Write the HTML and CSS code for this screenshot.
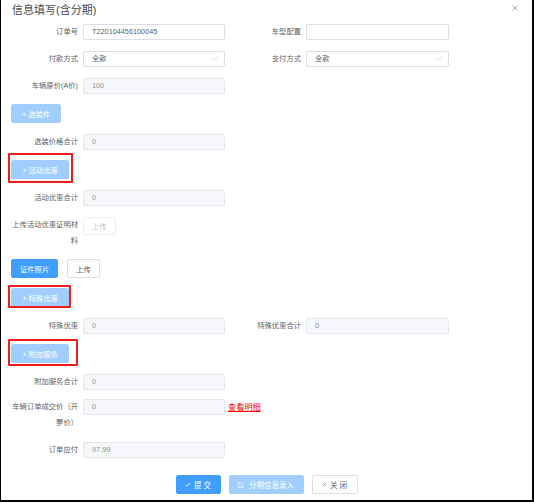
FILE: index.html
```html
<!DOCTYPE html>
<html lang="zh">
<head>
<meta charset="utf-8">
<title>信息填写(含分期)</title>
<link rel="stylesheet" href="styles.css">
</head>
<body>
<div class="dialog">
  <div class="header">
    <span class="title">信息填写(含分期)</span>
    <span class="close"><svg width="6" height="6" viewBox="0 0 6 6"><path d="M0.5 0.5L5.5 5.5M5.5 0.5L0.5 5.5" stroke="#909399" stroke-width="0.8" fill="none"/></svg></span>
  </div>
  <div class="body">
    <div class="row">
      <div class="item"><label class="lbl">订单号</label><div class="input">T220104456100045</div></div>
      <div class="item"><label class="lbl">车型配置</label><div class="input wide"></div></div>
    </div>
    <div class="row">
      <div class="item"><label class="lbl">付款方式</label><div class="input select">全款<svg class="chev" width="7" height="4" viewBox="0 0 7 4"><path d="M0.5 0.5L3.5 3.3L6.5 0.5" stroke="#c0c4cc" stroke-width="0.7" fill="none"/></svg></div></div>
      <div class="item"><label class="lbl">支付方式</label><div class="input select wide">全款<svg class="chev" width="7" height="4" viewBox="0 0 7 4"><path d="M0.5 0.5L3.5 3.3L6.5 0.5" stroke="#c0c4cc" stroke-width="0.7" fill="none"/></svg></div></div>
    </div>
    <div class="item"><label class="lbl">车辆原价(A价)</label><div class="input disabled">100</div></div>

    <div class="btn-row"><span class="btn light add">+ 选装件</span></div>
    <div class="item"><label class="lbl">选装价格合计</label><div class="input disabled">0</div></div>

    <div class="btn-row"><span class="btn light mark mark-1">+ 活动优惠</span></div>
    <div class="item"><label class="lbl">活动优惠合计</label><div class="input disabled">0</div></div>
    <div class="item"><label class="lbl">上传活动优惠证明材料</label><span class="btn plain-dis">上传</span></div>

    <div class="btn-row gap"><span class="btn primary">证件照片</span><span class="btn plain">上传</span></div>
    <div class="btn-row"><span class="btn light mark mark-2">+ 特殊优惠</span></div>
    <div class="row">
      <div class="item"><label class="lbl">特殊优惠</label><div class="input disabled">0</div></div>
      <div class="item"><label class="lbl">特殊优惠合计</label><div class="input disabled wide">0</div></div>
    </div>

    <div class="btn-row"><span class="btn light mark mark-3">+ 附加服务</span></div>
    <div class="item tight"><label class="lbl">附加服务合计</label><div class="input disabled">0</div></div>
    <div class="item"><label class="lbl">车辆订单成交价（开票价）</label><div class="input disabled">0</div><a class="link">查看明细</a></div>
    <div class="item last"><label class="lbl">订单应付</label><div class="input disabled">97.99</div></div>
  </div>
  <div class="footer">
    <span class="btn primary fbtn"><svg class="ico" width="6" height="5" viewBox="0 0 6 5"><path d="M0.6 2.6L2.3 4.1L5.4 0.8" stroke="#fff" stroke-width="0.9" fill="none"/></svg>提 交</span>
    <span class="btn light fbtn wide-f"><svg class="ico" width="6" height="6" viewBox="0 0 6 6"><path d="M3 0.6H0.6V5.4H5.4V3" stroke="#fff" stroke-width="0.7" fill="none"/><path d="M2.4 3.6L5.2 0.8" stroke="#fff" stroke-width="0.7" fill="none"/></svg>分期信息录入</span>
    <span class="btn plain fbtn"><svg class="ico" width="5" height="5" viewBox="0 0 5 5"><path d="M0.6 0.6L4.4 4.4M4.4 0.6L0.6 4.4" stroke="#909399" stroke-width="0.7" fill="none"/></svg>关 闭</span>
  </div>
</div>
</body>
</html>
```

FILE: styles.css
```css
html, body {
  margin: 0;
  padding: 0;
  background: #fff;
}
.dialog {
  width: 534px;
  height: 502px;
  box-sizing: border-box;
  border-left: 1px solid #000;
  border-right: 2px solid #000;
  border-bottom: 2px solid #000;
  font-family: "Liberation Sans", "Noto Sans CJK SC", sans-serif;
  font-size: 7.3px;
  color: #606266;
  position: relative;
}
.header {
  display: flex;
  justify-content: space-between;
  align-items: flex-start;
  padding: 2px 10px 0 11px;
  height: 22px;
  box-sizing: border-box;
}
.title {
  font-size: 11px;
  line-height: 16px;
  color: #4a4a4a;
}
.close {
  display: flex;
  margin-top: 3px;
  margin-right: 4px;
}
.body {
  padding: 2px 0 0 10px;
}
.row {
  display: flex;
  gap: 9px;
}
.item {
  display: flex;
  align-items: flex-start;
  margin-bottom: 11px;
}
.item.tight { margin-bottom: 9px; }
.item.last { margin-bottom: 0; }
.lbl {
  width: 72px;
  padding-right: 5px;
  box-sizing: border-box;
  text-align: right;
  line-height: 16px;
  color: #606266;
  flex-shrink: 0;
}
.input {
  width: 142px;
  height: 16px;
  box-sizing: border-box;
  border: 1px solid #dcdfe6;
  border-radius: 2px;
  padding: 0 8px;
  line-height: 14px;
  color: #606266;
  display: flex;
  align-items: center;
  justify-content: space-between;
}
.input.wide { width: 143px; }
.input.disabled {
  background: #f5f7fa;
  border-color: #e4e7ed;
  color: #909399;
}
.chev { margin-right: -2px; }
.btn-row {
  display: flex;
  margin-top: -1px;
  margin-bottom: 11px;
}
.btn-row.gap { gap: 9px; }
.btn {
  display: inline-flex;
  align-items: center;
  justify-content: center;
  height: 19px;
  box-sizing: border-box;
  border-radius: 2px;
  padding: 0 8px;
  border: 1px solid transparent;
  white-space: nowrap;
  position: relative;
}
.btn.light {
  background: #a0cfff;
  border-color: #a0cfff;
  color: #fff;
}
.btn.add { width: 50px; }
.btn.mark { width: 58px; }
.btn.primary {
  background: #409eff;
  border-color: #409eff;
  color: #fff;
}
.btn.plain {
  background: #fff;
  border-color: #dcdfe6;
  color: #606266;
}
.btn.plain-dis {
  background: #fff;
  border-color: #ebeef5;
  color: #c0c4cc;
  height: 18px;
}
.btn.mark::after {
  content: "";
  position: absolute;
  border: 2px solid #f01b1b;
  border-radius: 1px;
  pointer-events: none;
}
.btn.mark-1::after { left: -4px; top: -8px; right: -5px; bottom: -5px; }
.btn.mark-2::after { left: -4px; top: -4px; right: -3px; bottom: -2px; }
.btn.mark-3::after { left: -4px; top: -6px; right: -10px; bottom: -4px; }
.link {
  color: #f00;
  text-decoration: underline;
  font-size: 8.2px;
  line-height: 18px;
  margin-left: 3px;
  cursor: pointer;
}
.footer {
  display: flex;
  justify-content: center;
  gap: 8px;
  margin-top: 17px;
}
.fbtn {
  font-size: 7.5px;
  width: 45px;
  gap: 3px;
}
.fbtn.wide-f { width: 75px; gap: 5px; }
.fbtn.plain { width: 46px; }
.ico { flex-shrink: 0; }
```
